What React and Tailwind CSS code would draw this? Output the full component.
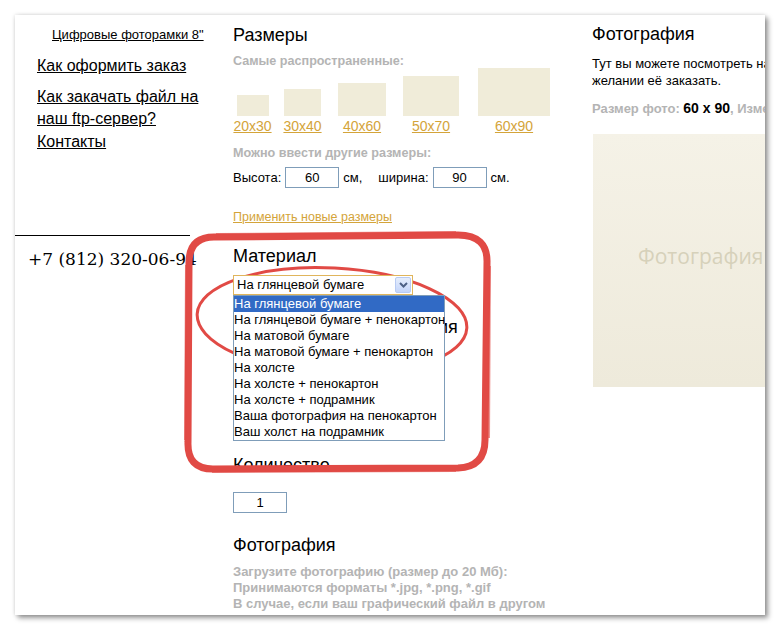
import React from "react";

const sizes = [
  { label: "20x30", box: "w-[32px] h-[21px]", cell: "w-[39px] ml-0" },
  { label: "30x40", box: "w-[37px] h-[27px]", cell: "w-[39px] ml-[11px]" },
  { label: "40x60", box: "w-[48px] h-[33px]", cell: "w-[48px] ml-[16px]" },
  { label: "50x70", box: "w-[56px] h-[40px]", cell: "w-[56px] ml-[17px]" },
  { label: "60x90", box: "w-[72px] h-[48px]", cell: "w-[72px] ml-[19px]" },
];

const materials = [
  "На глянцевой бумаге",
  "На глянцевой бумаге + пенокартон",
  "На матовой бумаге",
  "На матовой бумаге + пенокартон",
  "На холсте",
  "На холсте + пенокартон",
  "На холсте + подрамник",
  "Ваша фотография на пенокартон",
  "Ваш холст на подрамник",
];

const Heading = ({ children, className = "" }) => (
  <h2 className={`text-[18px] leading-[22px] text-black ${className}`}>{children}</h2>
);

const Sidebar = () => (
  <aside className="w-[218px] shrink-0 pt-[12px]">
    <a className="block pl-[37px] text-[13px] leading-[16px] text-black underline">
      Цифровые фоторамки 8"
    </a>
    <div className="pl-[22px] text-[16px] leading-[22px] text-black">
      <a className="block mt-[12px] underline">Как оформить заказ</a>
      <a className="block mt-[9px] underline">
        Как закачать файл на
        <br />
        наш ftp-сервер?
      </a>
      <a className="block mt-[1px] underline">Контакты</a>
    </div>
    {/* Divider + phone */}
    <div className="mt-[82px] h-px w-[175px] bg-black" />
    <p className="mt-[12px] pl-[13px] font-['DejaVu_Serif',serif] text-[17px] leading-[22px] text-black whitespace-nowrap">
      +7 (812) 320-06-94
    </p>
  </aside>
);

const SizeInput = ({ value, className = "" }) => (
  <div
    className={`h-[21px] w-[54px] border border-[#7f9db9] bg-white text-center text-[13px] leading-[19px] text-black ${className}`}
  >
    {value}
  </div>
);

const OrderForm = () => (
  <main className="w-[359px] shrink-0 pt-[9px]">
    <Heading>Размеры</Heading>
    <p className="mt-[9px] text-[12.6px] font-bold leading-[13px] text-[#b4b4b4]">
      Самые распространенные:
    </p>

    {/* Popular sizes */}
    <div className="flex">
      {sizes.map((s) => (
        <div key={s.label} className={`flex flex-col items-center ${s.cell}`}>
          <div className="flex h-[48px] items-end">
            <div className={`bg-[#f0ecd9] ${s.box}`} />
          </div>
          <a className="mt-[2px] text-[14px] leading-[16px] text-[#d4a43a] underline">{s.label}</a>
        </div>
      ))}
    </div>

    <p className="mt-[11px] text-[12.6px] font-bold leading-[16px] text-[#b4b4b4]">
      Можно ввести другие размеры:
    </p>
    <div className="mt-[6px] flex items-center text-[13px] text-black">
      <span>Высота:</span>
      <SizeInput value="60" className="ml-[4px]" />
      <span className="ml-[4px]">см,</span>
      <span className="ml-[16px]">ширина:</span>
      <SizeInput value="90" className="ml-[4px]" />
      <span className="ml-[4px]">см.</span>
    </div>
    <a className="mt-[21px] block text-[12.5px] leading-[16px] text-[#d4a43a] underline">
      Применить новые размеры
    </a>

    <Heading className="mt-[20px]">Материал</Heading>
    <div className="relative z-10 mt-[8px] h-[20px] w-[180px]">
      <div className="flex h-full items-center justify-between border border-[#e0b55c] bg-white pl-[3px] pr-[1px] text-[13px] text-black">
        <span>На глянцевой бумаге</span>
        <span className="flex h-[16px] w-[16px] items-center justify-center rounded-[2px] border border-[#b8cbf3] bg-gradient-to-b from-[#e6eefc] to-[#c4d5fa]">
          <svg width="9" height="6" viewBox="0 0 9 6">
            <path d="M1 1l3.5 3.5L8 1" fill="none" stroke="#4d6185" strokeWidth="2" />
          </svg>
        </span>
      </div>
      {/* Open dropdown */}
      <ul className="absolute left-0 top-full w-[212px] border border-[#7f9db9] bg-white text-[13px] leading-[16px] text-black">
        {materials.map((m, i) => (
          <li
            key={m}
            className={`whitespace-nowrap ${i === 0 ? "bg-[#316ac5] text-white" : ""}`}
          >
            {m}
          </li>
        ))}
      </ul>
    </div>

    <Heading className="mt-[21px] whitespace-nowrap">Оформление и ламинация</Heading>

    <Heading className="mt-[116px]">Количество</Heading>
    <SizeInput value="1" className="mt-[16px]" />

    <Heading className="mt-[21px]">Фотография</Heading>
    <div className="mt-[8px] text-[13px] font-bold leading-[16px] text-[#b4b4b4] whitespace-nowrap">
      <p>Загрузите фотографию (размер до 20 Мб):</p>
      <p>Принимаются форматы *.jpg, *.png, *.gif</p>
      <p>В случае, если ваш графический файл в другом</p>
    </div>
  </main>
);

const Preview = () => (
  <section className="w-[280px] shrink-0 pt-[8px]">
    <Heading>Фотография</Heading>
    <p className="mt-[10px] whitespace-nowrap text-[13px] leading-[17px] text-black">
      Тут вы можете посмотреть на неё и при
      <br />
      желании её заказать.
    </p>
    <p className="mt-[11px] whitespace-nowrap text-[13px] font-bold leading-[16px] text-[#b4b4b4]">
      Размер фото: <span className="text-[14px] text-black">60 x 90</span>, Изменить размер
    </p>
    <div className="ml-px mt-[17px] flex h-[253px] w-[260px] items-center bg-gradient-to-b from-[#f5f2e7] to-[#eeeadb] pb-[8px] pl-[45px]">
      <span className="text-[21px] text-[#d6d1ba] font-['Open_Sans',sans-serif]">Фотография</span>
    </div>
  </section>
);

const Annotations = () => (
  <svg className="pointer-events-none absolute inset-0" width="780" height="630" viewBox="0 0 780 630">
    <path
      d="M214 237 L458 235 Q488 235 487 263 L485 440 Q485 467 458 468 L213 469 Q187 469 188 442 L189 263 Q189 237 214 237 Z"
      fill="none"
      stroke="#e14a45"
      strokeWidth="7"
      strokeLinejoin="round"
    />
    <path
      d="M216 234 L456 232 M490 266 L489 438 M212 472 L456 471 M185 440 L186 265"
      fill="none"
      stroke="#e14a45"
      strokeWidth="2"
      strokeOpacity="0.6"
    />
    <ellipse
      cx="332"
      cy="321"
      rx="135"
      ry="53"
      transform="rotate(3 332 321)"
      fill="none"
      stroke="#e14a45"
      strokeWidth="3"
    />
  </svg>
);

export default function App() {
  return (
    <div className="relative h-[630px] w-[780px] overflow-hidden bg-white pl-[15px] pt-[15px] font-['Liberation_Sans',Arial,sans-serif]">
      <div className="flex h-[600px] w-[750px] overflow-hidden bg-white shadow-[3px_3px_5px_rgba(0,0,0,0.4),0_0_4px_rgba(0,0,0,0.15)]">
        <Sidebar />
        <OrderForm />
        <Preview />
      </div>
      <Annotations />
    </div>
  );
}
